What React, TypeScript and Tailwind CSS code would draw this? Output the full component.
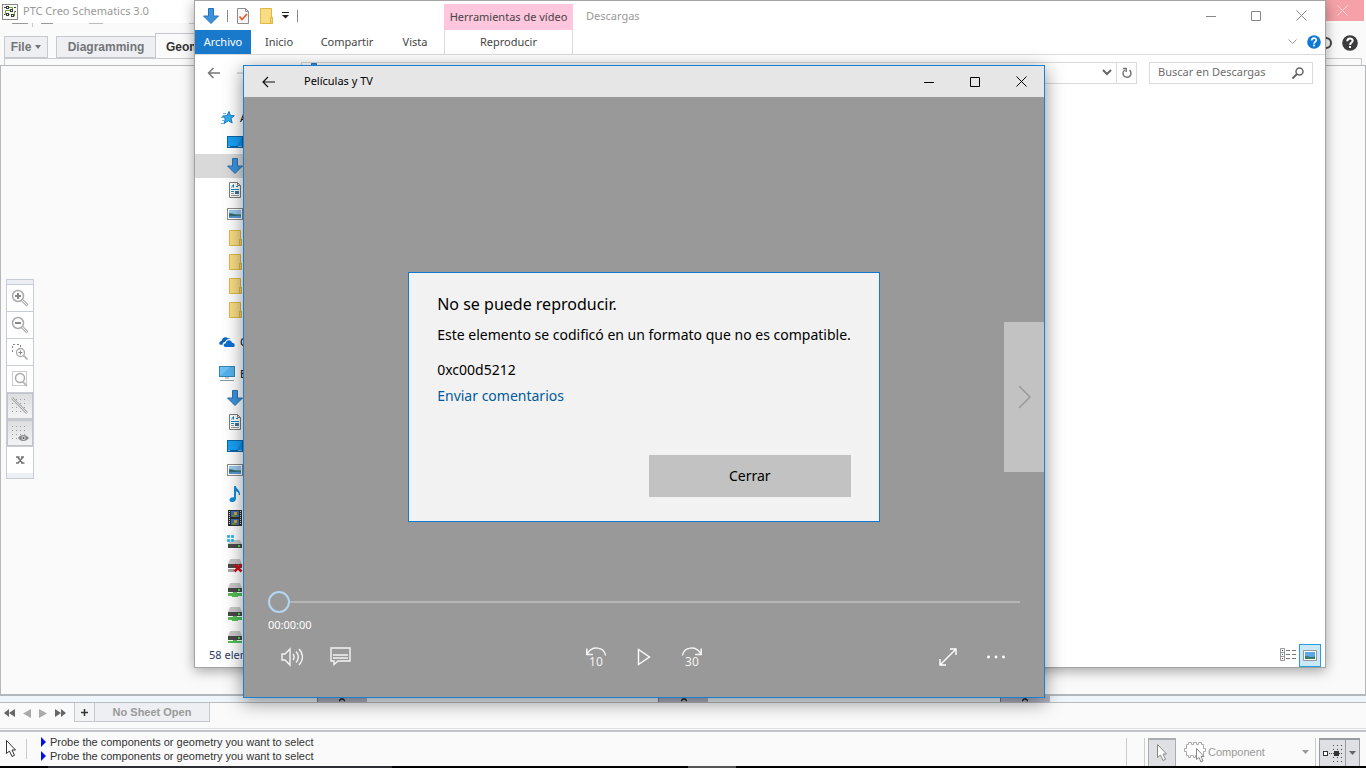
import React from 'react';

type P = { className?: string };

const CreoLogo = () => (
  <svg width="16" height="16" viewBox="0 0 16 16" fill="none">
    <rect x="0.5" y="0.5" width="15" height="15" fill="#fbfcfa" stroke="#8a8a8a" />
    <path d="M6 3.500h4.500v3H3.500v4H8M12.500 8v4H10.500" stroke="#69a832" />
    <path d="M2 3.500h2M12 3.500h2M2 10.500h1M12.500 7.500h1.500" stroke="#444" />
    <g fill="#fff" stroke="#3a3a3a">
      <rect x="4.500" y="2.500" width="2" height="2" />
      <rect x="8.500" y="5.500" width="2" height="2" />
      <rect x="4.500" y="9.500" width="2" height="2" />
      <rect x="9.500" y="10.500" width="2" height="2" />
    </g>
  </svg>
);

const DownArrow = () => (
  <svg width="16" height="16" viewBox="0 0 16 16" className="shrink-0">
    <path d="M5.500 0.500h5v7.500h5L8 15.500 0.500 8h5z" fill="#3d92dd" stroke="#2a72b8" />
  </svg>
);

const Folder = () => (
  <svg width="16" height="16" viewBox="0 0 16 16" className="shrink-0">
    <path d="M2.500 0.500h11v9h1v6h-12z" fill="#f8dd83" stroke="#dfb845" />
    <path d="M12.500 15.500v-6h2v6z" fill="#f3d169" stroke="#dfb845" />
  </svg>
);

const CheckDoc = () => (
  <svg width="14" height="16" viewBox="0 0 14 16" fill="none">
    <path d="M1.500 0.500h8l3 3v12h-11z" fill="#f7f7f7" stroke="#8d8d8d" />
    <path d="M9.500 0.500v3h3" stroke="#8d8d8d" />
    <path d="M3.500 8.500l2.500 3 5-5.500" stroke="#ec5b29" strokeWidth="1.800" />
  </svg>
);

const Star = () => (
  <svg width="16" height="16" viewBox="0 0 16 16" className="shrink-0">
    <path d="M10 1.500l1.300 4 4 .2-3.300 2.700 1.200 4.600-3.900-2.300L5 13.500l1.300-4.600L3.500 6l4.500-.3z" fill="#35adf0" stroke="#1478c4" />
    <path d="M4 3.500h3M2 7.500h3M3 10.500h3M2 13.500h3" stroke="#5eb8ec" />
  </svg>
);

const Desktop = () => (
  <svg width="16" height="16" viewBox="0 0 16 16" className="shrink-0">
    <rect x="0.500" y="2.500" width="15" height="11" fill="#18a0f4" stroke="#0967ad" />
    <path d="M1 12h9L15 3v10H1z" fill="#0b91e8" />
    <path d="M1 12.500h14" stroke="#0867ac" />
    <path d="M1.500 12.500h1M11.500 12.500h1M13.500 12.500h1" stroke="#fff" />
  </svg>
);

const Doc = () => (
  <svg width="16" height="16" viewBox="0 0 16 16" fill="none" className="shrink-0">
    <path d="M2.500 0.500h8l3 3v12h-11z" fill="#fff" stroke="#7d7d7d" />
    <path d="M10.500 0.500v3h3" stroke="#7d7d7d" />
    <path d="M4.500 5.500l2-3v3M9 4.500h2M4 7.500h8M4 9.500h3" stroke="#1687c9" />
    <path d="M4 11.500h3M4 13.500h8" stroke="#999" />
    <rect x="8" y="9" width="4" height="3" fill="#3d7496" />
  </svg>
);

const Picture = () => (
  <svg width="16" height="16" viewBox="0 0 16 16" className="shrink-0">
    <rect x="0.500" y="2.500" width="15" height="11" fill="#fff" stroke="#8c8c8c" />
    <rect x="2" y="4" width="12" height="8" fill="#9cc9ee" />
    <path d="M2 7.500c3-1 5 1.500 12 1V12H2z" fill="#356c70" />
    <path d="M2 10.500c4-.5 8-1 12-.5v2H2z" fill="#5b9cd1" />
  </svg>
);

const Cloud = () => (
  <svg width="16" height="16" viewBox="0 0 16 16" className="shrink-0">
    <path d="M.5 10.500c-.8-1.700.4-3.500 2-3.600C3 3.800 6.300 2 9 4.200c1-.2 2 0 2.600.8C8.300 4.500 6.500 6 6 8c-2 .3-2.700 1.500-2.500 3z" fill="#0a64bd" />
    <path d="M6.500 13c-2.500-.3-2.500-3.500.3-3.800C7 5.800 12 5 13 8.700c3.300.2 3.500 4 1 4.300z" fill="#0c6fcf" />
  </svg>
);

const Monitor = () => (
  <svg width="16" height="16" viewBox="0 0 16 16" className="shrink-0">
    <rect x="0.500" y="0.500" width="15" height="10" fill="#6fc1f3" stroke="#3382b5" />
    <path d="M1 10L11 1h4v9z" fill="#55b0ea" />
    <path d="M6 12h4M1 14.500h14" stroke="#8b9aa5" />
  </svg>
);

const Note = () => (
  <svg width="16" height="16" viewBox="0 0 16 16" className="shrink-0">
    <path d="M7 0h1.800c.3 3 4.700 4 4.200 9h-1.300c.3-2.500-1.200-3.200-2.700-3.700v7.200c0 4.300-6.500 4.800-6.500 1.500 0-2.200 2.500-3.200 4.500-2.700z" fill="#0f8de0" />
  </svg>
);

const Film = () => (
  <svg width="16" height="16" viewBox="0 0 16 16" className="shrink-0">
    <rect x="1" y="0" width="14" height="16" fill="#2e2e2e" />
    <rect x="4" y="1" width="8" height="6" fill="#3d6db5" />
    <rect x="4" y="9" width="8" height="6" fill="#3d6db5" />
    <path d="M5 5h4v2H5zM5 13h4v2H5z" fill="#6d8a36" />
    <path d="M7 2h3v3H7zM7 10h3v3H7z" fill="#d5a32a" />
    <path d="M2.500 1v14M13.500 1v14" stroke="#ddd" strokeDasharray="1 1" />
  </svg>
);

const Drive = ({ kind }: { kind: 'win' | 'bad' | 'net' }) => (
  <svg width="16" height="16" viewBox="0 0 16 16" className="shrink-0">
    {kind === 'win' ? (
      <g>
        <path d="M3 6h10l2 4H1z" fill="#c9c9c9" />
        <rect x="1" y="10" width="14" height="4" fill="#4a4a4a" />
        <rect x="11" y="11" width="2" height="2" fill="#48e048" />
        <path d="M0 1h3v3H0zM4 1h3v3H4zM0 5h3v3H0zM4 5h3v3H4z" fill="#18b3ea" stroke="#fff" strokeWidth=".3" />
      </g>
    ) : (
      <g>
        <path d="M3 1h10l2 5H1z" fill="#c9c9c9" />
        <rect x="1" y="6" width="14" height="4" fill="#4a4a4a" />
        <rect x="11" y="7" width="2" height="2" fill="#48e048" />
      </g>
    )}
    {kind === 'net' && <path d="M6 10h4v1h5v3h-4v1H5v-1H1v-3h5z" fill="#55bd57" />}
    {kind === 'bad' && (
      <g>
        <path d="M1 11h6v3H1z" fill="#aaa" />
        <path d="M7.500 6.500l7 7M14.500 6.500l-7 7" stroke="#d0101c" strokeWidth="2.500" />
      </g>
    )}
  </svg>
);

const Glyph = ({ children, className }: P & { children: React.ReactNode }) => (
  <svg width="20" height="20" viewBox="0 0 20 20" fill="none" className={className}>
    {children}
  </svg>
);

const Cursor = ({ className }: P) => (
  <svg width="14" height="20" viewBox="0 0 14 20" className={className}>
    <path d="M2.500 1.500v13l3-2.500 2.500 5.500 2.500-1.200-2.500-5.300h3.500z" fill="#fff" stroke="currentColor" />
  </svg>
);

const Help = ({ className, fill }: P & { fill: string }) => (
  <svg width="16" height="16" viewBox="0 0 16 16" className={className}>
    <circle cx="8" cy="8" r="7.800" fill={fill} />
    <path d="M5.300 6.300c0-3.600 5.400-3.500 5.400-.5 0 1.900-2.600 1.700-2.600 4.200" fill="none" stroke="#fff" strokeWidth="2" />
    <rect x="7" y="11" width="2" height="2" fill="#fff" />
  </svg>
);

const quickAccess = [
  { label: 'Escritorio', icon: <Desktop /> },
  { label: 'Descargas', icon: <DownArrow />, selected: true },
  { label: 'Documentos', icon: <Doc /> },
  { label: 'Imágenes', icon: <Picture /> },
  { label: 'Carpeta 1', icon: <Folder /> },
  { label: 'Carpeta 2', icon: <Folder /> },
  { label: 'Carpeta 3', icon: <Folder /> },
  { label: 'Carpeta 4', icon: <Folder /> },
];

const computer = [
  { label: 'Descargas', icon: <DownArrow /> },
  { label: 'Documentos', icon: <Doc /> },
  { label: 'Escritorio', icon: <Desktop /> },
  { label: 'Imágenes', icon: <Picture /> },
  { label: 'Música', icon: <Note /> },
  { label: 'Vídeos', icon: <Film /> },
  { label: 'Disco local', icon: <Drive kind="win" /> },
  { label: 'Unidad desconectada', icon: <Drive kind="bad" /> },
  { label: 'Unidad de red 1', icon: <Drive kind="net" /> },
  { label: 'Unidad de red 2', icon: <Drive kind="net" /> },
  { label: 'Unidad de red 3', icon: <Drive kind="net" /> },
];

function TreeRow({ label, icon, selected }: { label: string; icon: React.ReactNode; selected?: boolean }) {
  return (
    <a href="#" aria-label={label} className={`flex h-6 shrink-0 items-center pl-8 ${selected ? 'bg-[#d9d9d9]' : ''}`}>
      {icon}
    </a>
  );
}

function TreeHead({ label, icon }: { label: string; icon: React.ReactNode }) {
  return (
    <a href="#" className="flex h-6 shrink-0 items-center gap-[5px] pl-6 whitespace-nowrap text-black">
      {icon}
      {label}
    </a>
  );
}

const lens = (
  <>
    <circle cx="8" cy="8" r="5.500" stroke="#aaa" strokeWidth="1.500" />
    <path d="M12 12l5.500 5.500" stroke="#b5b5b5" strokeWidth="3" />
    <path d="M12 12l5 5" stroke="#eee" />
  </>
);
const dots = <path d="M2 3.500h16M2 7.500h16M2 11.500h16M2 15.500h16" stroke="#999" strokeDasharray="1 3" />;

const tools = [
  { label: 'Zoom in', art: <>{lens}<path d="M5 8h6M8 5v6" stroke="#888" strokeWidth="2" /></> },
  { label: 'Zoom out', art: <>{lens}<path d="M5 8h6" stroke="#888" strokeWidth="2" /></> },
  {
    label: 'Zoom window',
    art: (
      <>
        <path d="M2.500 10V2.500h8V5" stroke="#888" strokeDasharray="2 2" />
        <circle cx="10.500" cy="10.500" r="4" stroke="#aaa" strokeWidth="1.300" />
        <path d="M8.500 10.500h4M10.500 8.500v4" stroke="#888" />
        <path d="M13.500 13.500l4 4" stroke="#bbb" strokeWidth="2" />
      </>
    ),
  },
  {
    label: 'Zoom sheet',
    art: (
      <>
        <rect x="2.500" y="2.500" width="14" height="14" stroke="#ccc" />
        <circle cx="10" cy="9" r="4.500" stroke="#aaa" strokeWidth="1.500" />
        <path d="M13 13l4 4" stroke="#bbb" strokeWidth="2" />
      </>
    ),
  },
  { label: 'Snap', pressed: true, art: <>{dots}<path d="M2 2l15 15" stroke="#aaa" strokeWidth="2.500" /><path d="M2 2l15 15" stroke="#ddd" /></> },
  {
    label: 'Grid',
    pressed: true,
    art: (
      <>
        {dots}
        <path d="M8 15c2.500-4 8-4 11 0-3 4-8.500 4-11 0z" fill="#888" />
        <circle cx="13.500" cy="15" r="2" fill="#ddd" />
        <circle cx="13.500" cy="15" r="1" fill="#555" />
      </>
    ),
  },
  { label: 'Close', art: <path d="M6 7h3.500M11 7h3M6 13h3M11 13h3.500M7.500 7l5 6M13 7l-5 6" stroke="#777" strokeWidth="1.600" /> },
];

function Schematics() {
  return (
    <div className="flex h-full flex-col bg-[#fafafa] font-['Liberation_Sans',sans-serif]">
      <header className="flex h-[23px] shrink-0 items-center justify-between bg-white pl-0.5">
        <div className="flex items-center gap-[5px] font-['Noto_Sans',sans-serif] text-[11px] text-[#999]">
          <CreoLogo />
          PTC Creo Schematics 3.0
        </div>
        <button aria-label="Close Schematics" className="mr-0.5 flex h-[21px] w-11 items-center justify-center self-start bg-[#f6a1a8]">
          <svg width="11" height="11" viewBox="0 0 11 11" stroke="#fbdadd">
            <path d="M.5 .5l10 10M10.500 .5l-10 10" />
          </svg>
        </button>
      </header>
      <div className="flex h-[10px] shrink-0 items-start pl-3">
        <span className="h-px w-4 bg-[#999]" />
        <span className="ml-1 h-1 w-px bg-[#ccc]" />
        <span className="ml-2 h-px w-3 bg-[#999]" />
        <span className="ml-9 h-px w-3.5 bg-[#bbb]" />
        <span className="ml-[86px] h-px w-2 bg-[#ccc]" />
      </div>
      <div className="flex h-[25px] shrink-0 items-end justify-between pl-1">
        <nav className="flex items-end text-xs font-bold text-[#737578]">
          <button className="mr-2 flex h-[22px] w-11 items-center justify-center gap-1 border border-[#c5c8cd] bg-[#edeff2]">
            File
            <svg width="6" height="4" fill="#737578"><path d="M0 0h6L3 4z" /></svg>
          </button>
          <button className="h-[22px] w-[99px] border border-r-0 border-[#c5c8cd] bg-[#edeff2]">Diagramming</button>
          <button className="h-[25px] border border-b-0 border-[#c5c8cd] bg-[#fafafa] px-2.5 pt-0.5 text-[#333]">Geometry</button>
        </nav>
        <div className="mr-2 flex items-center gap-2 self-start pt-0.5">
          <svg width="16" height="16" fill="none" stroke="#444" strokeWidth="2"><circle cx="8" cy="8" r="5" /></svg>
          <button aria-label="Help"><Help fill="#3b3b3d" /></button>
        </div>
      </div>
      <div className="mr-1 ml-1 h-[7px] shrink-0 border border-b-0 border-[#c8cacd]" />
      <main className="flex min-h-0 flex-1 items-start border border-b-2 border-[#b5b8bb] pt-[213px] pl-[5px]">
        <div className="flex flex-col border border-[#c8cdd5] bg-[#eceff3] pt-1 pb-[5px]">
          {tools.map((t) => (
            <button
              key={t.label}
              aria-label={t.label}
              className={`flex h-[27px] w-[26px] items-center justify-center border-t border-[#c8cdd5] ${t.pressed ? 'bg-linear-to-b from-[#dcdddf] to-[#f4f4f6] inset-ring inset-ring-[#c2c4c8]' : 'bg-white'}`}
            >
              <Glyph>{t.art}</Glyph>
            </button>
          ))}
        </div>
      </main>
      <div className="flex h-[7px] shrink-0 justify-around border-b border-[#b7bcc0] bg-[#eef6fb] px-[12.5%]">
        {[0, 1, 2].map((n) => (
          <span key={n} className="flex w-[50px] justify-center border-l border-[#777b90] bg-[#b3b4c4]">
            <svg width="6" height="6" fill="none" stroke="#222" strokeWidth="1.500"><path d="M0 5l2-2h2l2 2" /></svg>
          </span>
        ))}
      </div>
      <div className="flex h-[25px] shrink-0 items-start">
        <div className="flex h-5 w-[74px] items-center justify-between pr-2 pl-1">
          <button aria-label="First sheet"><svg width="11" height="8" fill="#666"><path d="M0 4l5-4v8zM5 4l6-4v8z" /></svg></button>
          <button aria-label="Previous sheet"><svg width="8" height="9" fill="#aaa"><path d="M0 4.500L8 0v9z" /></svg></button>
          <button aria-label="Next sheet"><svg width="8" height="9" fill="#aaa"><path d="M8 4.500L0 0v9z" /></svg></button>
          <button aria-label="Last sheet"><svg width="11" height="8" fill="#666"><path d="M11 4L6 0v8zM6 4L0 0v8z" /></svg></button>
        </div>
        <button aria-label="Add sheet" className="flex h-[19px] w-[21px] items-center justify-center border border-t-0 border-[#c5c8cd] bg-[#f2f3f5]">
          <svg width="7" height="7" stroke="#333" strokeWidth="1.500"><path d="M0 3.500h7M3.500 0v7" /></svg>
        </button>
        <div className="flex h-[19px] w-[115px] items-center justify-center border border-t-0 border-l-0 border-[#c5c8cd] bg-[#edeff2] text-[11px] font-bold text-[#999]">
          No Sheet Open
        </div>
      </div>
      <div className="h-1 shrink-0 border-t border-b-2 border-t-[#dfe0e2] border-b-[#c0c3c8]" />
      <footer className="flex h-[34px] shrink-0 items-center">
        <Cursor className="ml-1 text-[#333]" />
        <span className="ml-2 h-5 w-px bg-[#ccc]" />
        <div className="ml-3.5 flex flex-col text-[11px] leading-[14px] text-[#333]">
          {[0, 1].map((n) => (
            <p key={n} className="flex items-center gap-1">
              <svg width="5" height="10" fill="#0010f0"><path d="M0 0l5 5-5 5z" /></svg>
              Probe the components or geometry you want to select
            </p>
          ))}
        </div>
        <div className="mr-1.5 ml-auto flex h-7 items-stretch self-end">
          <span className="mr-[17px] w-px bg-[#ccc]" />
          <span className="mr-[3px] w-px bg-[#ccc]" />
          <button aria-label="Select" className="flex w-7 items-center justify-center border border-t-2 border-b-0 border-[#a9acb0] bg-[#dfe0e3] text-[#888]">
            <Cursor />
          </button>
          <button className="flex w-[133px] items-center pl-2 text-[11px] text-[#999]">
            <svg width="22" height="22" viewBox="0 0 22 22" fill="#fff" stroke="#aaa" className="mr-0.5">
              <path d="M2.500 3.500h2v-2h3v2h2v-2h3v2h2v-2h3v2h2v4h2v3h-2v4h-3v2h-2v-2h-3v2h-2v-2h-3v2h-2v-2h-2v-4h-2v-3h2z" />
              <path d="M12.500 7.500v11l2.500-2 2 4.500 2-1-2-4.500h3z" stroke="#888" />
            </svg>
            Component
            <svg width="7" height="4" fill="#999" className="ml-auto"><path d="M0 0h7L3.500 4z" /></svg>
          </button>
          <span className="mr-[3px] ml-1.5 w-px bg-[#ccc]" />
          <button aria-label="Snap mode" className="flex w-[27px] items-center justify-center border border-t-2 border-b-0 border-[#999ca1] bg-[#dfe0e3]">
            <svg width="22" height="20" fill="none">
              <path d="M11 2.500h9M11 6.500h9M11 14.500h9M11 18.500h9" stroke="#444" strokeDasharray="1 3" />
              <path d="M7 10.500h13" stroke="#444" strokeDasharray="1 1" />
              <rect x="1.500" y="8.500" width="4" height="4" fill="#fff" stroke="#333" />
              <rect x="12" y="8" width="5" height="5" fill="#333" />
            </svg>
          </button>
          <button aria-label="Snap options" className="flex w-3.5 items-center justify-center border border-t-2 border-b-0 border-l-0 border-[#999ca1] bg-[#dfe0e3]">
            <svg width="7" height="4" fill="#666"><path d="M0 0h7L3.500 4z" /></svg>
          </button>
        </div>
      </footer>
      <div className="flex h-0.5 shrink-0 bg-black">
        <span className="ml-12 w-[344px] bg-[#2b2d31]" />
        <span className="ml-[296px] w-12 bg-[#555]" />
      </div>
    </div>
  );
}

function Explorer() {
  return (
    <section
      aria-label="Descargas"
      className="absolute top-0 right-10 bottom-[100px] left-[194px] flex flex-col border border-[#a3a3a3] bg-white font-['Noto_Sans',sans-serif] text-[11px] text-[#444] shadow-[0_3px_12px_rgba(0,0,0,0.35)]"
    >
      <header className="flex h-[54px] shrink-0 border-b border-[#dadbdc]">
        <div className="flex w-[249px] flex-col">
          <div className="flex h-[30px] items-center gap-2 pl-2">
            <DownArrow />
            <span className="h-3 w-px bg-[#888]" />
            <CheckDoc />
            <Folder />
            <svg width="7" height="7" fill="#222"><path d="M0 0h7v1H0zM0 3h7L3.500 6.500z" /></svg>
            <span className="h-3 w-px bg-[#888]" />
          </div>
          <nav className="flex h-6 items-stretch">
            <button className="w-14 bg-[#1979ca] text-white">Archivo</button>
            <button className="w-14">Inicio</button>
            <button className="w-20">Compartir</button>
            <button className="w-14">Vista</button>
          </nav>
        </div>
        <div className="flex w-[129px] flex-col pt-[3px]">
          <div className="flex h-[27px] items-center justify-center bg-[#ffc6de]">Herramientas de vídeo</div>
          <button className="h-6 border-x border-[#ddd]">Reproducir</button>
        </div>
        <h1 className="flex h-[30px] items-center pl-[13px] text-[#999]">Descargas</h1>
        <div className="ml-auto flex flex-col">
          <div className="flex h-[29px] text-[#888]">
            <button aria-label="Minimizar ventana" className="flex w-[46px] items-center justify-center"><svg width="10" height="10" stroke="currentColor"><path d="M0 5.500h10" /></svg></button>
            <button aria-label="Maximizar ventana" className="flex w-11 items-center justify-center"><svg width="10" height="10" fill="none" stroke="currentColor"><path d="M.5 .5h9v9h-9z" /></svg></button>
            <button aria-label="Cerrar ventana" className="flex w-[47px] items-center justify-center"><svg width="11" height="11" stroke="currentColor"><path d="M.5 .5l10 10M10.500 .5l-10 10" /></svg></button>
          </div>
          <div className="flex h-6 items-center justify-end gap-2.5 pr-1">
            <svg width="9" height="6" fill="none" stroke="#999"><path d="M.5 .5l4 4 4-4" /></svg>
            <button aria-label="Ayuda"><Help fill="#0e78d5" className="size-[14px]" /></button>
          </div>
        </div>
      </header>
      <div className="flex h-[35px] shrink-0 items-center pl-3 text-[#666]">
        <button aria-label="Atrás">
          <svg width="14" height="12" fill="none" stroke="#777" strokeWidth="1.500"><path d="M13 6H1.500M6.500 1l-5 5 5 5" /></svg>
        </button>
        <span className="ml-4 h-0.5 w-3 bg-[#ddd]" />
        <div className="ml-[52px] flex h-[22px] flex-1 items-stretch border border-[#d9d9d9]">
          <span className="pl-1"><DownArrow /></span>
          <button aria-label="Ubicaciones recientes" className="mr-1 ml-auto"><svg width="10" height="7" fill="none" stroke="#666" strokeWidth="2"><path d="M1 1l4 4 4-4" /></svg></button>
          <button aria-label="Actualizar" className="flex w-5 items-center justify-center border-l border-[#d9d9d9]">
            <svg width="12" height="12" fill="none" stroke="#777" strokeWidth="1.500"><path d="M8.500 3.200A4 4 0 1 1 3.800 3M2 1.500h3.200V5" /></svg>
          </button>
        </div>
        <label className="mr-3 ml-3 flex h-[22px] w-[164px] items-center border border-[#d9d9d9] pr-2 pl-2">
          <input aria-label="Buscar en Descargas" placeholder="Buscar en Descargas" className="min-w-0 flex-1 outline-none placeholder:text-[#6d6d6d]" />
          <svg width="12" height="12" fill="none" stroke="#666" strokeWidth="1.500"><circle cx="7.500" cy="4.500" r="3.500" /><path d="M5 7L.5 11.500" strokeWidth="2" /></svg>
        </label>
      </div>
      <nav aria-label="Panel de navegación" className="mt-4 flex min-h-0 w-60 flex-1 flex-col gap-2 overflow-hidden">
        <div className="flex shrink-0 flex-col">
          <TreeHead label="Acceso rápido" icon={<Star />} />
          {quickAccess.map((r) => <TreeRow key={r.label} {...r} />)}
        </div>
        <TreeHead label="OneDrive" icon={<Cloud />} />
        <div className="flex shrink-0 flex-col">
          <TreeHead label="Este equipo" icon={<Monitor />} />
          {computer.map((r, i) => <TreeRow key={i} {...r} />)}
        </div>
      </nav>
      <footer className="flex h-6 shrink-0 items-center pl-3.5 text-[#2a3a66]">
        58 elementos
        <button aria-label="Detalles" className="ml-auto flex w-[22px] items-center justify-center">
          <svg width="16" height="14" fill="none">
            <path d="M.5 .5h4v12h-4zM.5 4.500h4M.5 8.500h4" stroke="#999" />
            <path d="M6 2.500h4M12 2.500h4M6 6.500h4M12 6.500h4M6 10.500h4M12 10.500h4" stroke="#777" />
            <path d="M2 2.500h1" stroke="#333" /><path d="M2 6.500h1" stroke="#2678e0" /><path d="M2 10.500h1" stroke="#d22" />
          </svg>
        </button>
        <button aria-label="Vistas en miniatura" className="mr-1 flex h-[23px] w-[22px] items-center justify-center border border-[#26a0da] bg-[#cbe8f6]">
          <svg width="14" height="11" fill="none"><path d="M.5 .5h13v10H.5z" fill="#fff" stroke="#999" /><path d="M2 2h10v7H2z" fill="#5aa7ea" /><path d="M2 6c3-.5 6 2 10 .5V9H2z" fill="#3c7a68" /></svg>
        </button>
      </footer>
    </section>
  );
}

function Skip({ seconds, forward }: { seconds: number; forward?: boolean }) {
  return (
    <button aria-label={`${forward ? 'Avanzar' : 'Retroceder'} ${seconds} segundos`} className="flex w-6 flex-col items-center text-[#f4f4f4]">
      <svg width="22" height="9" viewBox="0 0 22 9" fill="none" stroke="currentColor" strokeWidth="1.500">
        {forward ? <path d="M1.500 8.500C3 -.5 15-1.500 19.500 6.500M20.200 1.500v6h-6" /> : <path d="M20.500 8.500C19-.5 7-1.500 2.500 6.500M1.800 1.500v6h6" />}
      </svg>
      <span className="text-xs leading-3">{seconds}</span>
    </button>
  );
}

function Player() {
  return (
    <section
      aria-label="Películas y TV"
      className="absolute top-[65px] right-[321px] bottom-[70px] left-[243px] flex flex-col border border-[#1a80d2] bg-[#999] font-['Noto_Sans',sans-serif] shadow-[0_4px_18px_rgba(0,0,0,0.45)]"
    >
      <header className="flex h-[31px] shrink-0 items-center bg-[#e6e6e6] text-[11px] text-black">
        <button aria-label="Volver" className="flex w-12 items-center justify-center">
          <svg width="13" height="12" fill="none" stroke="#111" strokeWidth="1.200"><path d="M13 6H1M6 1L1 6l5 5" /></svg>
        </button>
        <h2 className="ml-3">Películas y TV</h2>
        <div className="ml-auto flex h-full">
          <button aria-label="Minimizar" className="flex w-[46px] items-center justify-center"><svg width="10" height="10" stroke="#000"><path d="M0 5.500h10" /></svg></button>
          <button aria-label="Maximizar" className="flex w-[46px] items-center justify-center"><svg width="10" height="10" fill="none" stroke="#000"><path d="M.5 .5h9v9h-9z" /></svg></button>
          <button aria-label="Cerrar reproductor" className="flex w-[46px] items-center justify-center"><svg width="11" height="11" stroke="#000"><path d="M.5 .5l10 10M10.500 .5l-10 10" /></svg></button>
        </div>
      </header>
      <div className="flex min-h-0 flex-1 flex-col">
        <div className="grid min-h-0 flex-1 grid-cols-[40px_1fr_40px] items-center pt-[106px]">
          <div role="alertdialog" aria-labelledby="error-title" className="col-start-2 flex flex-col justify-self-center border border-[#0f7ad3] bg-[#f2f2f2] px-7 pt-[18px] pb-6 text-sm text-black">
            <h3 id="error-title" className="text-base leading-[26px]">No se puede reproducir.</h3>
            <p className="mt-2 leading-5">Este elemento se codificó en un formato que no es compatible.</p>
            <p className="mt-[15px] leading-5">0xc00d5212</p>
            <a href="#" className="mt-1.5 self-start leading-5 text-[#005a9e]">Enviar comentarios</a>
            <button className="mt-[49px] h-[42px] w-[202px] self-end bg-[#c2c2c2]">Cerrar</button>
          </div>
          <button aria-label="Siguiente" className="flex h-[150px] items-center justify-center bg-[#c2c2c2]">
            <svg width="13" height="24" fill="none" stroke="#999" strokeWidth="1.500"><path d="M1 1l11 11L1 23" /></svg>
          </button>
        </div>
        <div className="flex shrink-0 flex-col px-6 pb-7">
          <div className="flex h-[22px] items-center">
            <span className="size-[22px] shrink-0 rounded-full border-2 border-[#b3d6f2]" />
            <span className="h-0.5 flex-1 bg-[#b5b5b5]" />
          </div>
          <time className="mt-1 text-[11px] leading-4 text-white">00:00:00</time>
          <div className="mt-3 grid h-6 grid-cols-3 items-center">
            <div className="flex gap-6 pl-3">
              <button aria-label="Volumen">
                <svg width="24" height="22" fill="none" stroke="#f4f4f4" strokeWidth="1.400"><path d="M2 8h3l5-5v16l-5-5H2zM13 8c1.500 2 1.500 4 0 6M16 5.500c3 3.500 3 7.500 0 11M19 3c4.500 5 4.500 11 0 16" /></svg>
              </button>
              <button aria-label="Subtítulos" className="flex w-6 justify-center">
                <svg width="21" height="20" fill="none" stroke="#f4f4f4" strokeWidth="1.400"><path d="M1 2h19v13H8l-4 3.500V15H1zM3 9h15M3 12h15" /></svg>
              </button>
            </div>
            <div className="flex items-center justify-center gap-6">
              <Skip seconds={10} />
              <button aria-label="Reproducir vídeo" className="flex w-6 justify-center">
                <svg width="14" height="18" fill="none" stroke="#fff" strokeWidth="1.400"><path d="M1.500 1.500v15l11-7.500z" /></svg>
              </button>
              <Skip seconds={30} forward />
            </div>
            <div className="flex justify-end gap-6 pr-3">
              <button aria-label="Pantalla completa" className="flex w-6 justify-center">
                <svg width="20" height="20" fill="none" stroke="#fff" strokeWidth="1.400"><path d="M2 18L18 2M12 2h6v6M2 12v6h6" /></svg>
              </button>
              <button aria-label="Más opciones" className="flex w-6 items-center justify-center">
                <svg width="20" height="4" fill="#fff"><circle cx="2.500" cy="2" r="1.400" /><circle cx="10" cy="2" r="1.400" /><circle cx="17.500" cy="2" r="1.400" /></svg>
              </button>
            </div>
          </div>
        </div>
      </div>
    </section>
  );
}

export default function App() {
  return (
    <div className="relative h-screen min-h-[700px] w-full overflow-hidden">
      <Schematics />
      <Explorer />
      <Player />
    </div>
  );
}
